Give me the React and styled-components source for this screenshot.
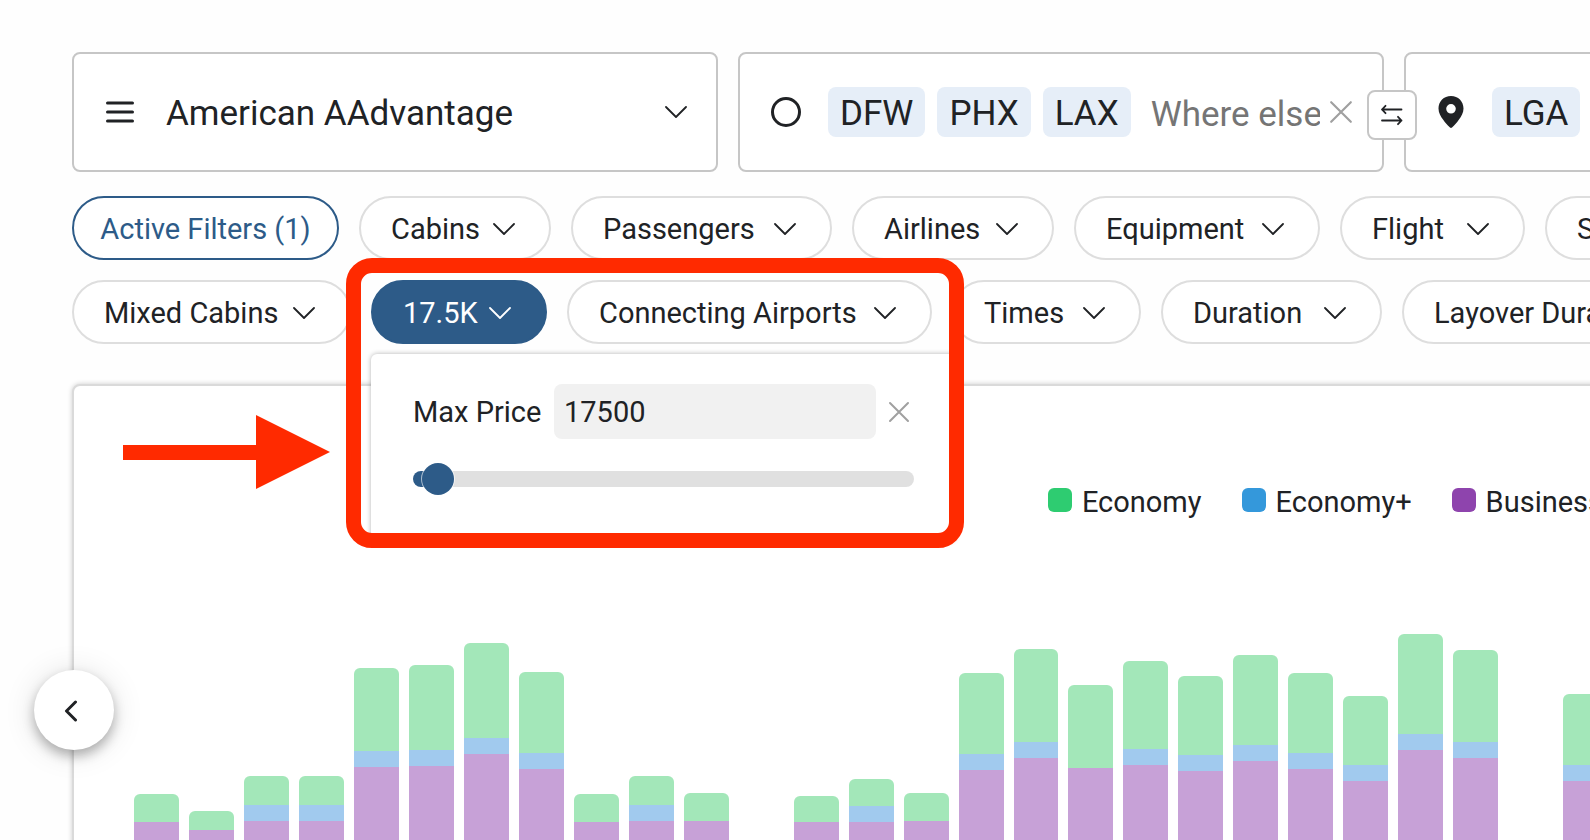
import React, { useState } from "react";
import styled, { createGlobalStyle, css } from "styled-components";

const color = {
  text: "#202225",
  primary: "#2d5b88",
  border: "#c6c6c6",
  pillBorder: "#dedede",
  chip: "#e6eef8",
  muted: "#757575",
  icon: "#a0a0a0",
  field: "#f1f1f1",
  track: "#e0e0e0",
  mark: "#ff2a00",
};

const cabinColors = {
  economy: "#a3e7b9",
  plus: "#a1caee",
  business: "#c7a1d7",
};

const GlobalStyle = createGlobalStyle`
  *, *::before, *::after { box-sizing: border-box; }
  body {
    margin: 0;
    overflow: hidden;
    background: #fefefe;
    color: ${color.text};
    font-family: Roboto, "Liberation Sans", sans-serif;
    font-size: 29px;
    line-height: 36px;
  }
  button, input { font: inherit; color: inherit; }
  button { cursor: pointer; }
  svg { display: block; flex: none; }
`;

const Page = styled.main`
  height: 100vh;
  overflow: hidden;
  padding: 52px 0 0 72px;
`;

const SearchRow = styled.section`
  display: flex;
  gap: 20px;
  margin-bottom: 24px;
  font-size: 35px;
`;

const fieldBox = css`
  position: relative;
  flex: 0 0 646px;
  height: 120px;
  display: flex;
  align-items: center;
  background: #fff;
  border: 2px solid ${color.border};
  border-radius: 8px;
`;

const ProgramButton = styled.button`
  ${fieldBox}
  gap: 32px;
  padding: 0 29px 0 32px;
  text-align: left;
`;

const ProgramName = styled.span`
  flex: 1;
  padding-top: 4px;
`;

const AirportField = styled.div`
  ${fieldBox}
  gap: 27px;
  padding: 0 29px 0 31px;
`;

const Chips = styled.div`
  flex: 1;
  min-width: 0;
  display: flex;
  align-items: center;
  gap: 12px;
`;

const Chip = styled.span`
  flex: none;
  height: 50px;
  padding: 0 12px;
  line-height: 54px;
  background: ${color.chip};
  border-radius: 8px;
`;

const AirportInput = styled.input`
  flex: 1;
  width: 0;
  min-width: 0;
  height: 50px;
  margin-left: 8px;
  padding: 4px 0 0;
  border: 0;
  outline: 0;
  background: none;
  &::placeholder { color: ${color.muted}; opacity: 1; }
`;

const IconButton = styled.button`
  flex: none;
  display: flex;
  padding: 0;
  border: 0;
  background: none;
  color: ${color.icon};
`;

const FieldClear = styled(IconButton)`
  margin-left: -18px;
`;

const SwapButton = styled.button`
  position: absolute;
  z-index: 1;
  top: 36px;
  right: -35px;
  width: 50px;
  height: 50px;
  display: flex;
  align-items: center;
  justify-content: center;
  padding: 0;
  background: #fff;
  border: 2px solid ${color.border};
  border-radius: 8px;
`;

const Filters = styled.section`
  display: flex;
  flex-direction: column;
  gap: 20px;
  margin-bottom: 40px;
`;

const FilterRow = styled.div`
  display: flex;
  gap: 20px;
`;

const Pill = styled.button`
  flex: none;
  width: ${(p) => p.$width}px;
  height: 64px;
  display: flex;
  align-items: center;
  justify-content: space-between;
  padding: 2px 34px 0 30px;
  white-space: nowrap;
  background: #fff;
  border: 2px solid ${color.pillBorder};
  border-radius: 32px;
  ${(p) =>
    p.$kind === "outline" &&
    css`
      justify-content: center;
      padding: 2px 0 0;
      color: ${color.primary};
      border-color: ${color.primary};
    `}
  ${(p) =>
    p.$kind === "solid" &&
    css`
      color: #fff;
      background: ${color.primary};
      border-color: ${color.primary};
    `}
`;

const PriceFilter = styled.div`
  position: relative;
  z-index: 2;
  flex: none;
`;

const PricePanel = styled.div`
  position: absolute;
  top: 74px;
  left: 0;
  width: 585px;
  padding: 30px 42px 46px;
  background: #fff;
  border-radius: 6px;
  box-shadow: 0 0 5px rgba(0, 0, 0, 0.3);
`;

const PriceLine = styled.div`
  display: flex;
  align-items: center;
  margin-bottom: 24px;
`;

const PriceLabel = styled.label`
  flex: 1;
`;

const PriceInput = styled.input`
  width: 322px;
  height: 55px;
  margin-right: 12px;
  padding: 0 10px;
  background: ${color.field};
  border: 0;
  border-radius: 8px;
`;

const PriceClear = styled(IconButton)`
  margin-right: 4px;
`;

const PriceSlider = styled.input`
  display: block;
  width: 100%;
  height: 32px;
  margin: 0;
  appearance: none;
  background: none;
  &::-webkit-slider-runnable-track {
    height: 16px;
    border-radius: 8px;
    background: linear-gradient(to right, ${color.primary} 20px, ${color.track} 20px);
  }
  &::-webkit-slider-thumb {
    appearance: none;
    width: 32px;
    height: 32px;
    margin-top: -8px;
    border-radius: 50%;
    background: ${color.primary};
    box-shadow: 0 0 0 1px rgba(255, 255, 255, 0.6);
  }
`;

const Highlight = styled.div`
  position: absolute;
  top: -22px;
  left: -25px;
  width: 618px;
  height: 290px;
  border: 15px solid ${color.mark};
  border-radius: 26px;
  pointer-events: none;
`;

const Card = styled.section`
  position: relative;
  margin-right: -20px;
  padding: 98px 0 24px 60px;
  background: #fff;
  border: 2px solid #dadada;
  border-radius: 8px;
  box-shadow: 0 0 5px rgba(0, 0, 0, 0.2);
`;

const Pointer = styled.svg`
  position: absolute;
  top: 29px;
  left: 49px;
`;

const PreviousButton = styled.button`
  position: absolute;
  top: 284px;
  left: -40px;
  width: 80px;
  height: 80px;
  display: flex;
  align-items: center;
  justify-content: center;
  padding: 2px 6px 0 0;
  background: #fff;
  border: 0;
  border-radius: 50%;
  box-shadow: 0 6px 12px rgba(0, 0, 0, 0.28), 0 2px 32px rgba(0, 0, 0, 0.12);
`;

const Legend = styled.ul`
  display: flex;
  gap: 40px;
  margin: 0 0 114px;
  padding: 0 0 0 62%;
  list-style: none;
  white-space: nowrap;
`;

const LegendItem = styled.li`
  flex: none;
  display: flex;
  align-items: center;
  gap: 10px;
  &::before {
    content: "";
    width: 24px;
    height: 24px;
    margin-bottom: 4px;
    border-radius: 6px;
    background: ${(p) => p.$color};
  }
`;

const Plot = styled.div`
  display: flex;
  align-items: flex-end;
  gap: 10px;
`;

const Bar = styled.div`
  flex: 1 1 0;
  overflow: hidden;
  border-radius: 6px 6px 0 0;
`;

const Segment = styled.div`
  background: ${(p) => cabinColors[p.$cabin]};
`;

const ChevronDown = () => (
  <svg width="22" height="12" viewBox="0 0 22 12" fill="none" stroke="currentColor" strokeWidth="1.8" strokeLinecap="round" strokeLinejoin="round" aria-hidden="true">
    <path d="M1 1l10 10L21 1" />
  </svg>
);

const Cross = ({ size, weight }) => (
  <svg width={size} height={size} viewBox="0 0 22 22" fill="none" stroke="currentColor" strokeWidth={weight} strokeLinecap="round" aria-hidden="true">
    <path d="M2 2l18 18M20 2L2 20" />
  </svg>
);

const MenuIcon = () => (
  <svg width="28" height="22" viewBox="0 0 28 22" fill="none" stroke="currentColor" strokeWidth="3" strokeLinecap="round" aria-hidden="true">
    <path d="M1.500 2h25M1.500 11h25M1.500 20h25" />
  </svg>
);

const OriginIcon = () => (
  <svg width="30" height="30" viewBox="0 0 30 30" fill="none" stroke="currentColor" strokeWidth="3" aria-hidden="true">
    <circle cx="15" cy="15" r="13.500" />
  </svg>
);

const PinIcon = () => (
  <svg width="28" height="32" viewBox="-1 0 28 32" fill="currentColor" aria-hidden="true">
    <path fillRule="evenodd" d="M13 0C5.800 0 .5 5.400.5 12.500c0 4.500 2.300 8 4.500 11.100 2 2.900 4.500 5.700 7 7.900.6.500 1.400.5 2 0 2.500-2.200 5-5 7-7.900 2.200-3.100 4.500-6.600 4.500-11.100C25.500 5.400 20.200 0 13 0zm0 8a4.800 4.800 0 1 1 0 9.600A4.800 4.800 0 0 1 13 8z" />
  </svg>
);

const SwapIcon = () => (
  <svg width="22" height="22" viewBox="0 0 22 22" fill="none" stroke="currentColor" strokeWidth="1.800" strokeLinecap="round" strokeLinejoin="round" aria-hidden="true">
    <path d="M20.500 5.500H1M4.500 1.800L1 5.500l3.500 3.700M1 16.500h19.500M17 12.800l3.500 3.700-3.500 3.700" />
  </svg>
);

const ChevronLeft = () => (
  <svg width="14" height="22" viewBox="0 0 14 22" fill="none" stroke="currentColor" strokeWidth="3" strokeLinecap="round" strokeLinejoin="round" aria-hidden="true">
    <path d="M11.500 2L2.500 11l9 9" />
  </svg>
);

const firstRow = [
  ["Cabins", 192],
  ["Passengers", 261],
  ["Airlines", 202],
  ["Equipment", 246],
  ["Flight", 185],
  ["Stops", 180],
];

const lastRow = [
  ["Connecting Airports", 365],
  ["Times", 189],
  ["Duration", 221],
  ["Layover Duration", 320],
];

/* Heights per day: economy, economy plus, business. */
const days = [
  [28, 0, 38], [19, 0, 30], [29, 16, 39], [29, 16, 39],
  [83, 16, 93], [85, 16, 94], [95, 16, 106], [81, 16, 91],
  [28, 0, 38], [29, 16, 39], [28, 0, 39], [0, 0, 0],
  [26, 0, 38], [27, 16, 38], [28, 0, 39], [81, 16, 90],
  [93, 16, 102], [83, 0, 92], [88, 16, 95], [79, 16, 89],
  [90, 16, 99], [80, 16, 91], [69, 16, 79], [100, 16, 110],
  [92, 16, 102], [0, 0, 0], [71, 16, 79],
];

function FilterPill({ label, width }) {
  return (
    <Pill type="button" $width={width}>
      {label}
      <ChevronDown />
    </Pill>
  );
}

export default function App() {
  const [price, setPrice] = useState("17500");

  return (
    <>
      <GlobalStyle />
      <Page>
        <SearchRow>
          <ProgramButton type="button">
            <MenuIcon />
            <ProgramName>American AAdvantage</ProgramName>
            <ChevronDown />
          </ProgramButton>
          <AirportField>
            <OriginIcon />
            <Chips>
              <Chip>DFW</Chip>
              <Chip>PHX</Chip>
              <Chip>LAX</Chip>
              <AirportInput aria-label="Origin airports" placeholder="Where else?" />
            </Chips>
            <FieldClear type="button" aria-label="Clear origins">
              <Cross size="24" weight="2" />
            </FieldClear>
            <SwapButton type="button" aria-label="Swap origin and destination">
              <SwapIcon />
            </SwapButton>
          </AirportField>
          <AirportField>
            <PinIcon />
            <Chips>
              <Chip>LGA</Chip>
              <AirportInput aria-label="Destination airports" />
            </Chips>
          </AirportField>
        </SearchRow>

        <Filters>
          <FilterRow>
            <Pill type="button" $kind="outline" $width={267}>Active Filters (1)</Pill>
            {firstRow.map(([label, width]) => (
              <FilterPill key={label} label={label} width={width} />
            ))}
          </FilterRow>
          <FilterRow>
            <FilterPill label="Mixed Cabins" width={279} />
            <PriceFilter>
              <Pill type="button" $kind="solid" $width={176} aria-expanded="true">
                17.5K
                <ChevronDown />
              </Pill>
              <PricePanel>
                <PriceLine>
                  <PriceLabel htmlFor="max-price">Max Price</PriceLabel>
                  <PriceInput id="max-price" value={price} onChange={(e) => setPrice(e.target.value)} />
                  <PriceClear type="button" aria-label="Clear max price" onClick={() => setPrice("")}>
                    <Cross size="22" weight="2" />
                  </PriceClear>
                </PriceLine>
                <PriceSlider
                  type="range"
                  aria-label="Max price slider"
                  min="0"
                  max="900000"
                  step="500"
                  value={Number(price) || 0}
                  onChange={(e) => setPrice(e.target.value)}
                />
              </PricePanel>
              <Highlight />
            </PriceFilter>
            {lastRow.map(([label, width]) => (
              <FilterPill key={label} label={label} width={width} />
            ))}
          </FilterRow>
        </Filters>

        <Card>
          <Legend>
            <LegendItem $color="#2ecc71">Economy</LegendItem>
            <LegendItem $color="#3498db">Economy+</LegendItem>
            <LegendItem $color="#8e44ad">Business</LegendItem>
          </Legend>
          <Plot>
            {days.map(([economy, plus, business], i) => (
              <Bar key={i}>
                <Segment $cabin="economy" style={{ height: economy }} />
                <Segment $cabin="plus" style={{ height: plus }} />
                <Segment $cabin="business" style={{ height: business }} />
              </Bar>
            ))}
          </Plot>
          <Pointer width="208" height="74" viewBox="0 0 208 74" fill={color.mark} aria-hidden="true">
            <path d="M0 30h133V0l74 37-74 37V45H0z" />
          </Pointer>
          <PreviousButton type="button" aria-label="Previous">
            <ChevronLeft />
          </PreviousButton>
        </Card>
      </Page>
    </>
  );
}
